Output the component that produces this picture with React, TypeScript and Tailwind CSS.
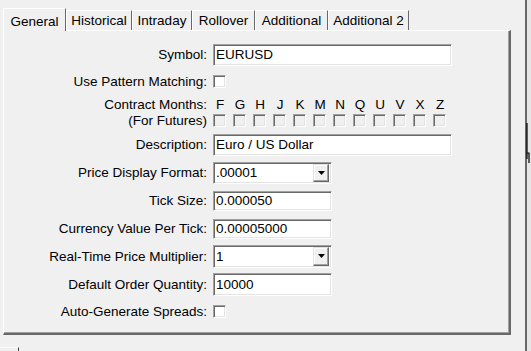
import React from "react";

const sunken =
  "border border-t-[#a0a0a0] border-l-[#a0a0a0] border-b-white border-r-white shadow-[inset_1px_1px_0_#696969,inset_-1px_-1px_0_#e3e3e3]";

function TextBox({ value, w, h = 22 }: { value: string; w: string; h?: number }) {
  return (
    <div className={`${w} bg-white ${sunken} flex items-center pl-[2px]`} style={{ height: h }}>
      <span className="leading-none">{value}</span>
    </div>
  );
}

function Combo({ value, h = 22 }: { value: string; h?: number }) {
  return (
    <div className={`w-[119px] bg-white ${sunken} flex items-center pl-[2px] pr-[2px]`} style={{ height: h }}>
      <span className="flex-1 leading-none">{value}</span>
      <div
        className="w-[16px] bg-[#f0f0f0] border border-t-[#e3e3e3] border-l-[#e3e3e3] border-b-[#696969] border-r-[#696969] shadow-[inset_-1px_-1px_0_#a0a0a0,inset_1px_1px_0_#ffffff] flex items-center justify-center"
        style={{ height: h - 4 }}
      >
        <svg width="7" height="4" viewBox="0 0 7 4">
          <path d="M0 0h7L3.5 4z" fill="#000" />
        </svg>
      </div>
    </div>
  );
}

function Check({ white = true }: { white?: boolean }) {
  return <div className={`w-[13px] h-[13px] ${white ? "bg-white" : "bg-[#f0f0f0]"} ${sunken}`} />;
}

function Row({ label, mt, h = 22, children }: { label: string; mt: number; h?: number; children: React.ReactNode }) {
  return (
    <div className="flex items-center" style={{ marginTop: mt, height: h }}>
      <div className="w-[203px] text-right leading-none">{label}</div>
      <div className="ml-[6px]">{children}</div>
    </div>
  );
}

const tabs: [string, number][] = [
  ["Historical", 66],
  ["Intraday", 60],
  ["Rollover", 63],
  ["Additional", 73],
  ["Additional 2", 81],
];

const months = ["F", "G", "H", "J", "K", "M", "N", "Q", "U", "V", "X", "Z"];

export default function App() {
  return (
    <div className="w-[531px] h-[351px] bg-[#f0f0f0] overflow-hidden flex text-[13.5px] text-black font-['Liberation_Sans',Arial,sans-serif] relative">
      <div className="w-[525px] flex flex-col">
        {/* tab strip */}
        <div className="h-[30px] pl-[3px] flex items-end">
          <div className="relative z-10 w-[63px] h-[23px] mb-[-1px] border-l border-t border-white border-r border-r-[#696969] bg-[#f0f0f0] flex items-start justify-center pt-[3px]">
            General
          </div>
          {tabs.map(([name, w]) => (
            <div
              key={name}
              className="h-[20px] pt-[1px] border-t border-l border-white border-r border-r-[#696969] flex items-center justify-center"
              style={{ width: w }}
            >
              {name}
            </div>
          ))}
        </div>

        {/* tab page */}
        <div className="ml-[3px] w-[508px] h-[306px] border-l border-t border-white border-r-2 border-b-2 border-r-[#696969] border-b-[#696969] shadow-[inset_-1px_-1px_0_#a0a0a0]">
          <Row label="Symbol:" mt={13}>
            <TextBox value="EURUSD" w="w-[239px]" />
          </Row>
          <Row label="Use Pattern Matching:" mt={5}>
            <Check />
          </Row>
          <div className="flex items-center mt-[5px] h-[14px]">
            <div className="w-[203px] text-right leading-none">Contract Months:</div>
            <div className="ml-[6px] flex">
              {months.map((m) => (
                <div key={m} className="w-[20px] text-center leading-none pr-[6px]">
                  {m}
                </div>
              ))}
            </div>
          </div>
          <div className="flex items-center mt-[2px] h-[14px]">
            <div className="w-[203px] text-right leading-none">(For Futures)</div>
            <div className="ml-[6px] flex gap-[7px]">
              {months.map((m) => (
                <Check key={m} white={false} />
              ))}
            </div>
          </div>
          <Row label="Description:" mt={6}>
            <TextBox value="Euro / US Dollar" w="w-[239px]" />
          </Row>
          <Row label="Price Display Format:" mt={6}>
            <Combo value=".00001" />
          </Row>
          <Row label="Tick Size:" mt={7} h={20}>
            <TextBox value="0.000050" w="w-[119px]" h={20} />
          </Row>
          <Row label="Currency Value Per Tick:" mt={8} h={20}>
            <TextBox value="0.00005000" w="w-[119px]" h={20} />
          </Row>
          <Row label="Real-Time Price Multiplier:" mt={6} h={23}>
            <Combo value="1" h={23} />
          </Row>
          <Row label="Default Order Quantity:" mt={5} h={23}>
            <TextBox value="10000" w="w-[119px]" h={23} />
          </Row>
          <Row label="Auto-Generate Spreads:" mt={5}>
            <Check />
          </Row>
        </div>

        <div className="mt-[12px] w-[19px] h-[4px] border-t border-[#fafafa] border-r border-r-[#404040]" />
      </div>

      {/* right edge */}
      <div className="w-[2px] h-full bg-[#696969]" />
      <div className="flex-1 h-full bg-[#e6e6e6]" />
      <svg className="absolute left-[526px] top-[123px]" width="5" height="40" viewBox="0 0 5 40">
        <path d="M1 0v36M1 30h2v10" stroke="#000" strokeWidth="1.2" fill="none" />
      </svg>
    </div>
  );
}
